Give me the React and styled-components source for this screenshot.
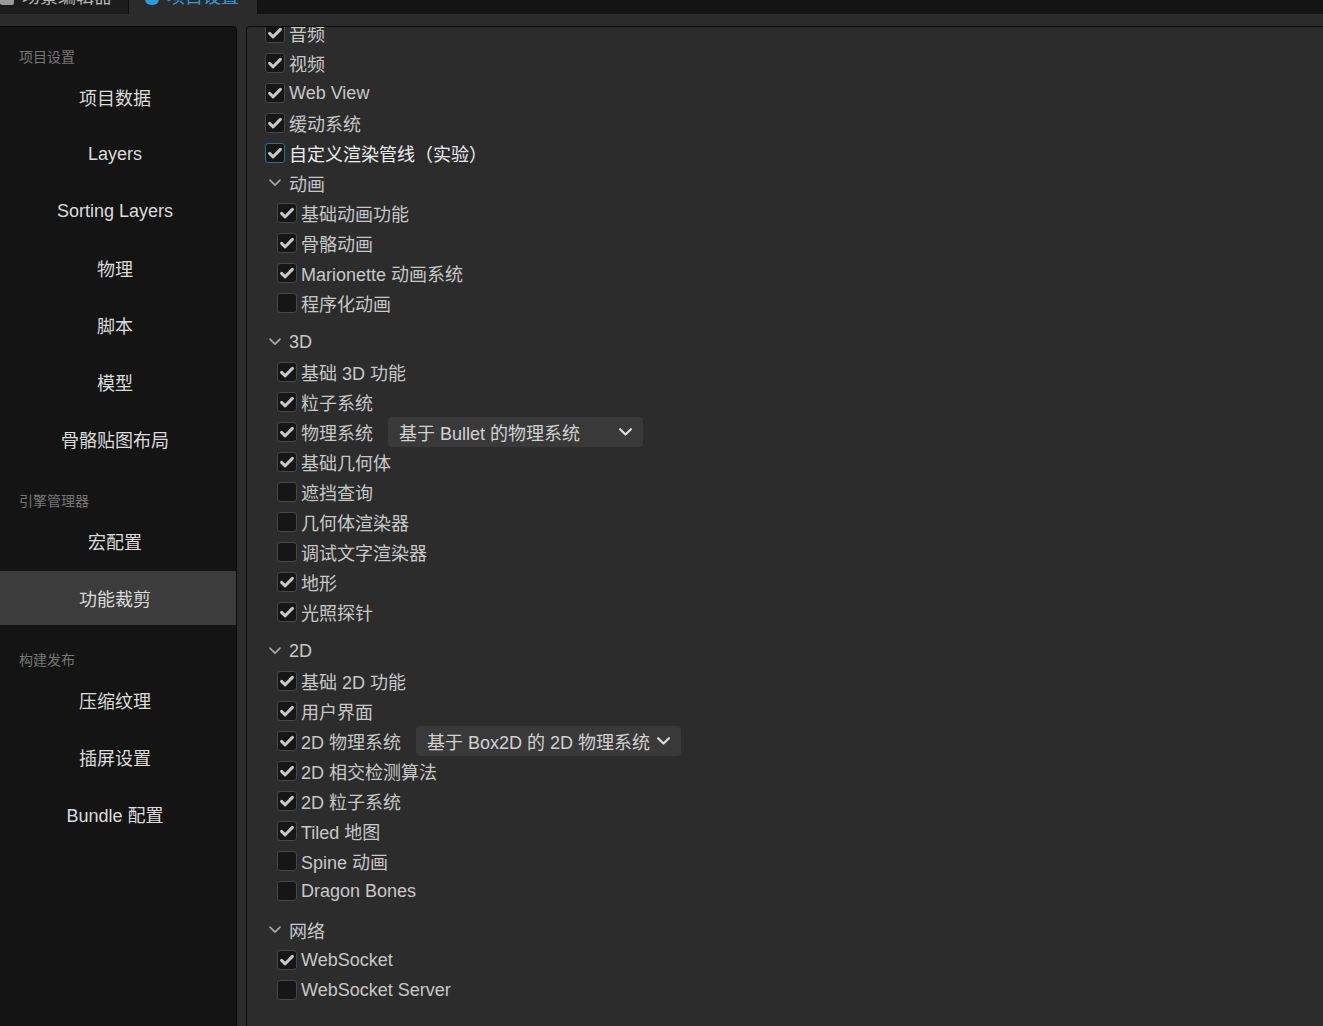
import styled, { createGlobalStyle } from "styled-components";

const GlobalStyle = createGlobalStyle`
  html, body {
    margin: 0;
    padding: 0;
    background: #2b2b2b;
    font-family: "Liberation Sans", "Noto Sans CJK SC", sans-serif;
    overflow: hidden;
  }
`;

const sideSections = [
    { title: "项目设置", items: ["项目数据", "Layers", "Sorting Layers", "物理", "脚本", "模型", "骨骼贴图布局"] },
    { title: "引擎管理器", items: ["宏配置", "功能裁剪"] },
    { title: "构建发布", items: ["压缩纹理", "插屏设置", "Bundle 配置"] },
];

const topItems = [
    { label: "音频", on: true },
    { label: "视频", on: true },
    { label: "Web View", on: true },
    { label: "缓动系统", on: true },
    { label: "自定义渲染管线（实验）", on: true, focus: true },
];

const groups = [
    {
        title: "动画",
        items: [
            { label: "基础动画功能", on: true },
            { label: "骨骼动画", on: true },
            { label: "Marionette 动画系统", on: true },
            { label: "程序化动画", on: false },
        ],
    },
    {
        title: "3D",
        items: [
            { label: "基础 3D 功能", on: true },
            { label: "粒子系统", on: true },
            { label: "物理系统", on: true, select: "基于 Bullet 的物理系统" },
            { label: "基础几何体", on: true },
            { label: "遮挡查询", on: false },
            { label: "几何体渲染器", on: false },
            { label: "调试文字渲染器", on: false },
            { label: "地形", on: true },
            { label: "光照探针", on: true },
        ],
    },
    {
        title: "2D",
        items: [
            { label: "基础 2D 功能", on: true },
            { label: "用户界面", on: true },
            { label: "2D 物理系统", on: true, select: "基于 Box2D 的 2D 物理系统" },
            { label: "2D 相交检测算法", on: true },
            { label: "2D 粒子系统", on: true },
            { label: "Tiled 地图", on: true },
            { label: "Spine 动画", on: false },
            { label: "Dragon Bones", on: false },
        ],
    },
    {
        title: "网络",
        items: [
            { label: "WebSocket", on: true },
            { label: "WebSocket Server", on: false },
        ],
    },
];

const CheckMark = () => (
    <svg width="16" height="16" viewBox="0 0 16 16">
        <path d="M2.6 8.4 L6.2 11.8 L13.4 4.4" fill="none" stroke="#c9c9c9" strokeWidth="3" strokeLinecap="round" strokeLinejoin="round" />
    </svg>
);

const Chevron = ({ color = "#a8a8a8", w = 12, sw = 1.6 }) => (
    <svg width={w} height={w * 0.6} viewBox="0 0 12 7">
        <path d="M1 1 L6 6 L11 1" fill="none" stroke={color} strokeWidth={sw} strokeLinecap="round" strokeLinejoin="round" />
    </svg>
);

const CheckRow = ({ item }) => (
    <Row>
        <Box $focus={item.focus}>{item.on && <CheckMark />}</Box>
        <Label $focus={item.focus}>{item.label}</Label>
        {item.select && (
            <Select>
                <span>{item.select}</span>
                <Chevron color="#dedede" w={13} sw={2} />
            </Select>
        )}
    </Row>
);

const App = () => {
    return (
        <>
            <GlobalStyle />
            <TabBar>
                <Tab>
                    <TabIcon $color="#9a9a9a" />
                    <TabText>场景编辑器</TabText>
                </Tab>
                <Tab $active>
                    <TabIcon $color="#2f9bd6" $round />
                    <TabText $active>项目设置</TabText>
                </Tab>
            </TabBar>
            <Body>
                <Sidebar>
                    {sideSections.map((s) => (
                        <Section key={s.title}>
                            <SectionTitle>{s.title}</SectionTitle>
                            {s.items.map((it) => (
                                <NavItem key={it} $active={it === "功能裁剪"}>
                                    {it}
                                </NavItem>
                            ))}
                        </Section>
                    ))}
                </Sidebar>
                <Main>
                    <List>
                        {topItems.map((it) => (
                            <CheckRow key={it.label} item={it} />
                        ))}
                        {groups.map((g) => (
                            <Group key={g.title}>
                                <Row>
                                    <Arrow>
                                        <Chevron />
                                    </Arrow>
                                    <Label>{g.title}</Label>
                                </Row>
                                <Children>
                                    {g.items.map((it) => (
                                        <CheckRow key={it.label} item={it} />
                                    ))}
                                </Children>
                            </Group>
                        ))}
                    </List>
                </Main>
            </Body>
        </>
    );
};

const TabBar = styled.div`
    height: 14px;
    background: #141414;
    display: flex;
    overflow: hidden;
`;

const Tab = styled.div`
    width: 129px;
    height: 14px;
    display: flex;
    align-items: flex-start;
    gap: 8px;
    padding-left: ${(p) => (p.$active ? "16px" : "0")};
    box-sizing: border-box;
    background: ${(p) => (p.$active ? "#2b2b2b" : "#1c1c1c")};
    border-right: 1px solid #0e0e0e;
`;

const TabIcon = styled.div`
    width: 14px;
    height: 18px;
    margin-top: -13px;
    border-radius: ${(p) => (p.$round ? "6px" : "2px")};
    background: ${(p) => p.$color};
    flex-shrink: 0;
`;

const TabText = styled.div`
    font-size: 18px;
    line-height: 18px;
    margin-top: -12px;
    color: ${(p) => (p.$active ? "#2f9bd6" : "#b8b8b8")};
    white-space: nowrap;
`;

const Body = styled.div`
    display: flex;
    gap: 9px;
    padding-top: 12px;
    height: calc(100vh - 26px);
`;

const Sidebar = styled.div`
    width: 236px;
    flex-shrink: 0;
    background: #141414;
    border-top: 1px solid #0a0a0a;
    border-right: 1px solid #0a0a0a;
    border-top-right-radius: 4px;
`;

const Section = styled.div`
    padding-top: 25px;
    &:first-child {
        padding-top: 20px;
    }
`;

const SectionTitle = styled.div`
    height: 20px;
    line-height: 20px;
    margin-bottom: 2px;
    padding-left: 19px;
    font-size: 14px;
    color: #767676;
`;

const NavItem = styled.div`
    height: 54px;
    margin-top: 3px;
    display: flex;
    align-items: center;
    justify-content: center;
    padding-right: 6px;
    font-size: 18px;
    color: #dcdcdc;
    background: ${(p) => (p.$active ? "#3c3c3c" : "transparent")};
`;

const Main = styled.div`
    flex: 1;
    background: #2c2c2c;
    border-top: 1px solid #0c0c0c;
    border-left: 1px solid #0c0c0c;
    border-top-left-radius: 4px;
    overflow: hidden;
`;

const List = styled.div`
    margin-top: -9px;
    padding-left: 18px;
`;

const Group = styled.div`
    margin-bottom: 9px;
`;

const Children = styled.div`
    padding-left: 12px;
`;

const Row = styled.div`
    height: 30px;
    display: flex;
    align-items: center;
    gap: 4px;
`;

const Box = styled.div`
    width: 20px;
    height: 20px;
    box-sizing: border-box;
    border-radius: 3px;
    border: 1px solid ${(p) => (p.$focus ? "#2b6f8f" : "#474747")};
    background: #161616;
    display: flex;
    align-items: center;
    justify-content: center;
    flex-shrink: 0;
`;

const Arrow = styled.div`
    width: 20px;
    display: flex;
    justify-content: center;
    align-items: center;
`;

const Label = styled.span`
    font-size: 18px;
    color: ${(p) => (p.$focus ? "#ececec" : "#c8c8c8")};
    white-space: nowrap;
`;

const Select = styled.div`
    margin-left: 11px;
    min-width: 255px;
    height: 30px;
    box-sizing: border-box;
    padding: 0 11px;
    display: flex;
    align-items: center;
    justify-content: space-between;
    gap: 7px;
    background: #393939;
    border-radius: 4px;
    font-size: 18px;
    color: #d2d2d2;
    white-space: nowrap;
`;

export default App;
